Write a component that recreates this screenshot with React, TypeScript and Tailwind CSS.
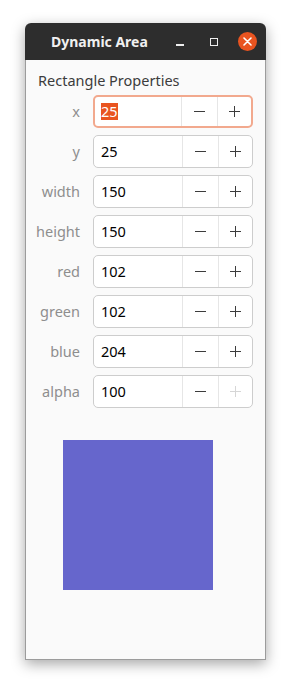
const FONT = "font-['Noto_Sans','DejaVu_Sans',sans-serif]"

type Row = { label: string; value: string; focused?: boolean; plusDisabled?: boolean }

const rows: Row[] = [
  { label: 'x', value: '25', focused: true },
  { label: 'y', value: '25' },
  { label: 'width', value: '150' },
  { label: 'height', value: '150' },
  { label: 'red', value: '102' },
  { label: 'green', value: '102' },
  { label: 'blue', value: '204' },
  { label: 'alpha', value: '100', plusDisabled: true },
]

function SpinButton({ row }: { row: Row }) {
  return (
    <div
      className={`flex h-[33px] rounded-[5px] bg-white ${
        row.focused ? 'border-2 border-[#f2a98e]' : 'border border-[#cdcdcd]'
      }`}
    >
      <div className={`flex flex-1 items-center ${row.focused ? 'pl-[6px]' : 'pl-[7px]'}`}>
        {row.focused ? (
          <span className="bg-[#e95420] text-white text-[14.5px] leading-[17px]">{row.value}</span>
        ) : (
          <span className="text-black text-[14.5px]">{row.value}</span>
        )}
      </div>
      <div className="w-[36px] border-l border-[#e6e6e6] flex items-center justify-center">
        <span className="block w-[11px] h-px bg-[#3c3c3c]" />
      </div>
      <div className="w-[34px] border-l border-[#e6e6e6] flex items-center justify-center relative">
        <span className={`block w-[11px] h-px ${row.plusDisabled ? 'bg-[#d6d6d6]' : 'bg-[#3c3c3c]'}`} />
        <span className={`absolute w-px h-[11px] ${row.plusDisabled ? 'bg-[#d6d6d6]' : 'bg-[#3c3c3c]'}`} />
      </div>
    </div>
  )
}

export default function App() {
  return (
    <div className={`w-[292px] h-[689px] bg-white pt-[23px] pl-[25px] ${FONT}`}>
      <div className="w-[241px] h-[637px] flex flex-col rounded-t-[6px] shadow-[0_4px_14px_rgba(0,0,0,0.35)]">
        {/* Title bar */}
        <div className="h-[37px] bg-[#2d2d2d] rounded-t-[6px] flex items-center">
          <span className="ml-[26px] text-[#f0f0f0] font-bold text-[14px]">Dynamic Area</span>
          <div className="ml-auto flex items-center">
            <span className="block w-[8px] h-[2px] bg-[#eeeeee] mt-[7px] mr-[26px]" />
            <span className="block w-[8px] h-[8px] border border-[#eeeeee] mr-[20px]" />
            <span className="w-[19px] h-[19px] rounded-full bg-[#e95420] flex items-center justify-center mr-[9px]">
              <svg width="9" height="9" viewBox="0 0 9 9">
                <path d="M1 1L8 8M8 1L1 8" stroke="white" strokeWidth="1.6" strokeLinecap="round" />
              </svg>
            </span>
          </div>
        </div>

        {/* Content */}
        <div className="flex-1 bg-[#fafafa] border-x border-b border-[#9c9c9c] px-[12px]">
          <div className="pt-[9px] text-[14.5px] text-[#3c3c3c] leading-[22px]">Rectangle Properties</div>
          <div className="mt-[4px] grid grid-cols-[42px_160px] gap-x-[13px] gap-y-[7px]">
            {rows.map((r) => (
              <div key={r.label} className="contents">
                <div className="flex items-center justify-end text-[14.5px] text-[#8e8e8e]">{r.label}</div>
                <SpinButton row={r} />
              </div>
            ))}
          </div>

          {/* Drawing area */}
          <div className="mt-[7px] pt-[25px] pl-[25px]">
            <div className="w-[150px] h-[150px] bg-[#6666cc]" />
          </div>
        </div>
      </div>
    </div>
  )
}
